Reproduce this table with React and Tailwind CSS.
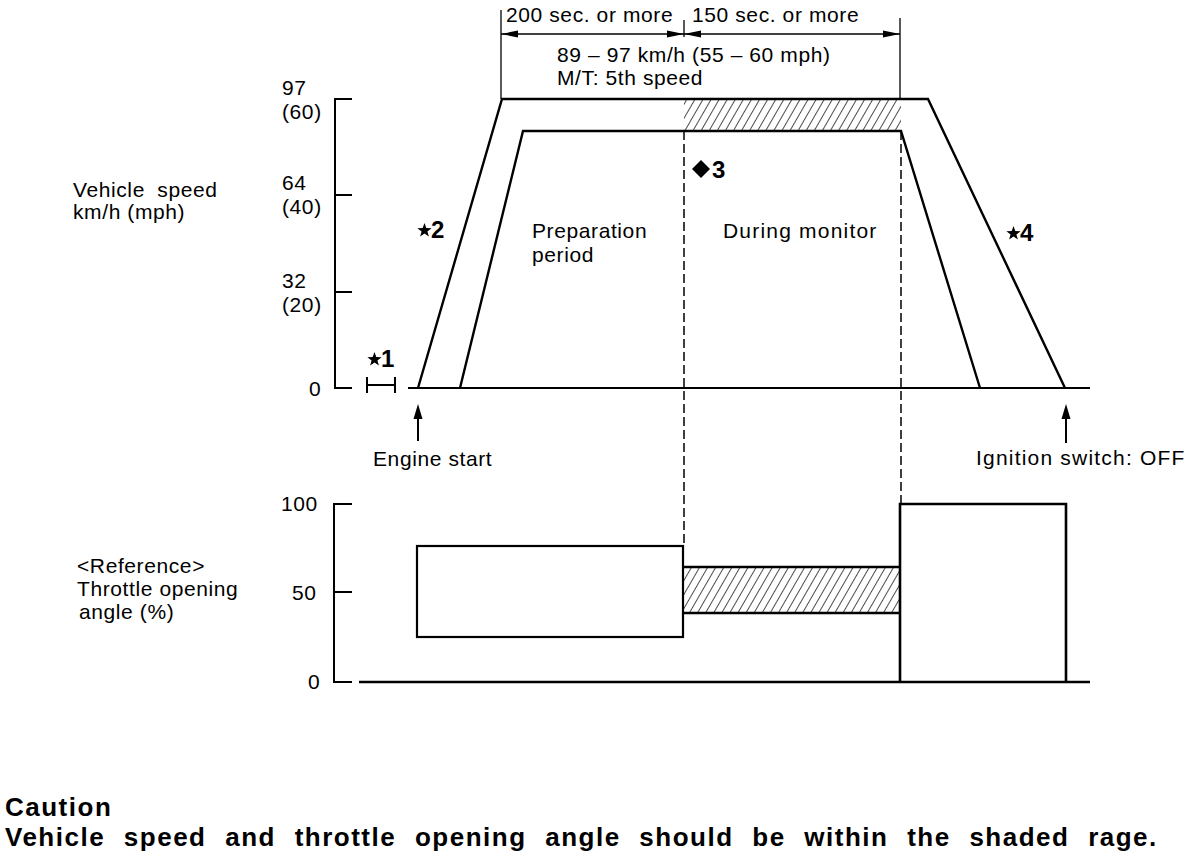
import React from 'react'

const FONT = "font-['Liberation_Sans',Arial,sans-serif] fill-black"
const LABEL = `${FONT} text-[21px]`
const BOLD = `${FONT} text-[24px] font-bold`

function starPoints(cx, cy, r1, r2) {
  const pts = []
  for (let i = 0; i < 10; i++) {
    const r = i % 2 === 0 ? r1 : r2
    const a = -Math.PI / 2 + (i * Math.PI) / 5
    pts.push(`${(cx + r * Math.cos(a)).toFixed(1)},${(cy + r * Math.sin(a)).toFixed(1)}`)
  }
  return pts.join(' ')
}

function Label({ x, y, wide, children, ...rest }) {
  return (
    <text x={x} y={y} className={`${LABEL} ${wide ? 'tracking-[1.2px]' : 'tracking-[0.6px]'}`} {...rest}>
      {children}
    </text>
  )
}

// ★n / ◆n markers
function Mark({ x, y, n, sym = 'star' }) {
  return (
    <g>
      {sym === 'star' ? (
        <polygon points={starPoints(x + 6.5, y - 7.5, 7.5, 3)} fill="#000" />
      ) : (
        <polygon points={`${x + 9},${y - 18} ${x + 18},${y - 9} ${x + 9},${y} ${x},${y - 9}`} fill="#000" />
      )}
      <text x={sym === 'star' ? x + 13 : x + 20} y={y} className={BOLD}>
        {n}
      </text>
    </g>
  )
}

function UpArrow({ x, top, bottom }) {
  return (
    <g>
      <line x1={x} y1={top + 10} x2={x} y2={bottom} stroke="#000" strokeWidth="2" />
      <polygon points={`${x},${top} ${x - 4.5},${top + 15} ${x + 4.5},${top + 15}`} fill="#000" />
    </g>
  )
}

function Chart() {
  return (
    <svg width="1200" height="792" viewBox="0 0 1200 792" className="block">
      <defs>
        <pattern id="hatch" width="7" height="7" patternUnits="userSpaceOnUse" patternTransform="rotate(30)">
          <line x1="0" y1="0" x2="0" y2="7" stroke="#000" strokeWidth="1.4" />
        </pattern>
      </defs>

      {/* dimension arrows on top */}
      <g stroke="#000" fill="none">
        <line x1="501" y1="10" x2="501" y2="99" strokeWidth="1.3" />
        <line x1="684" y1="20" x2="684" y2="37" strokeWidth="1.3" />
        <line x1="900" y1="18" x2="900" y2="99" strokeWidth="1.3" />
        <line x1="501" y1="34" x2="900" y2="34" strokeWidth="1.6" />
      </g>
      <g fill="#000">
        <polygon points="501,34 518,30.5 518,37.5" />
        <polygon points="684,34 667,30.5 667,37.5" />
        <polygon points="684,34 701,30.5 701,37.5" />
        <polygon points="900,34 883,30.5 883,37.5" />
      </g>
      <Label x={506} y={22}>200 sec. or more</Label>
      <Label x={692} y={22}>150 sec. or more</Label>
      <Label x={557} y={62}>89 – 97 km/h (55 – 60 mph)</Label>
      <Label x={557} y={85}>M/T: 5th speed</Label>

      {/* vehicle speed chart */}
      <rect x="684" y="99" width="217" height="32" fill="url(#hatch)" />
      <g stroke="#000" fill="none" strokeLinejoin="miter">
        <path d="M352 99 H335 V388 H352 M335 195 H352 M335 292 H352" strokeWidth="2" />
        <polyline points="418,388 502,99 928,99 1065,388" strokeWidth="2.4" />
        <polyline points="460,388 523,131 901,131 980,388" strokeWidth="2.4" />
        <line x1="408" y1="388" x2="1090" y2="388" strokeWidth="2.2" />
        <path d="M367 377 V393 M367 385 H395 M395 377 V393" strokeWidth="2" />
        <line x1="684" y1="131" x2="684" y2="546" strokeWidth="1.5" strokeDasharray="9 4" />
        <line x1="901" y1="131" x2="901" y2="504" strokeWidth="1.5" strokeDasharray="9 4" />
      </g>

      <Label x={282} y={95}>97</Label>
      <Label x={282} y={119}>(60)</Label>
      <Label x={282} y={190}>64</Label>
      <Label x={282} y={214}>(40)</Label>
      <Label x={282} y={288}>32</Label>
      <Label x={282} y={312}>(20)</Label>
      <Label x={309} y={396}>0</Label>
      <Label x={73} y={197} wordSpacing="6">Vehicle speed</Label>
      <Label x={73} y={219}>km/h (mph)</Label>

      <Mark x={368} y={367} n="1" />
      <Mark x={418} y={238} n="2" />
      <Mark x={692} y={178} n="3" sym="diamond" />
      <Mark x={1007} y={241} n="4" />

      <Label x={532} y={238}>Preparation</Label>
      <Label x={532} y={262}>period</Label>
      <Label x={723} y={238} wide>During monitor</Label>

      <UpArrow x={418} top={404} bottom={441} />
      <UpArrow x={1066} top={404} bottom={443} />
      <Label x={373} y={466}>Engine start</Label>
      <Label x={976} y={465} wide>Ignition switch: OFF</Label>

      {/* throttle chart */}
      <rect x="684" y="567" width="216" height="46" fill="url(#hatch)" />
      <g stroke="#000" fill="none">
        <path d="M352 504 H334 V682 H352 M334 592 H352" strokeWidth="2" />
        <line x1="359" y1="682" x2="1090" y2="682" strokeWidth="2.4" />
        <rect x="417" y="546" width="266" height="91" strokeWidth="2.2" />
        <path d="M683 567 H900 M683 613 H900" strokeWidth="2.4" />
        <path d="M900 682 V504 H1066 V682" strokeWidth="2.6" />
      </g>

      <Label x={281} y={511}>100</Label>
      <Label x={292} y={600}>50</Label>
      <Label x={308} y={689}>0</Label>
      <Label x={77} y={573}>&lt;Reference&gt;</Label>
      <Label x={77} y={596}>Throttle opening</Label>
      <Label x={79} y={619}>angle (%)</Label>
    </svg>
  )
}

export default function App() {
  return (
    <div className="w-[1200px] h-[864px] bg-white overflow-hidden text-black">
      <Chart />
      <div className="pl-[5px] font-['Liberation_Sans',Arial,sans-serif] text-[26px] leading-[30px] font-bold tracking-[1.5px] [word-spacing:10px]">
        <p>Caution</p>
        <p>Vehicle speed and throttle opening angle should be within the shaded rage.</p>
      </div>
    </div>
  )
}
